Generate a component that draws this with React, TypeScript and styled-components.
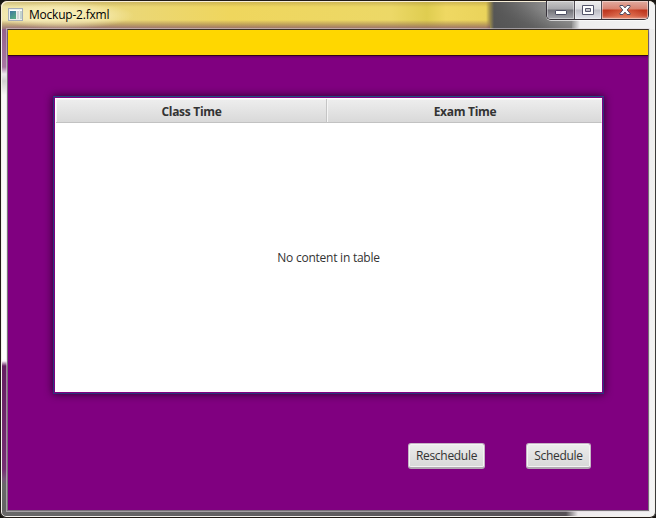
import React from 'react';
import styled, { createGlobalStyle } from 'styled-components';

const GlobalStyle = createGlobalStyle`
  * { box-sizing: border-box; }
  html, body { margin: 0; padding: 0; overflow: hidden; background: #171511; }
  body { font-family: "Open Sans", "Noto Sans", sans-serif; }
`;

const WindowFrame = styled.div`
  width: 656px;
  height: 518px;
  display: flex;
  flex-direction: column;
  border: 1px solid #211b17;
  border-right-color: #3b3b3b;
  border-radius: 7px 7px 6px 6px;
  padding: 0 6px 6px;
  box-shadow: inset 0 0 0 1px #f4f1ec;
  background:
    linear-gradient(90deg, #686868 0, #605e60 300px, #555055 565px, #eeeaec 577px, #f4f4f4 100%) 0 510px / 100% 8px no-repeat,
    linear-gradient(180deg, #ededed 0, #f5f5f5 100%) 647px 28px / 9px 490px no-repeat,
    linear-gradient(180deg, #95628c 0, #a878a2 38px, #eee9ee 45px, #d2d0d0 52px, #f9f7f7 66px, #fff 330px, #fcf5fa 332px, #651e62 337px, #762e73 440px, #78567a 450px, #686868 456px, #626262 100%) 0 28px / 8px 490px no-repeat,
    #eee;
`;

const TitleBar = styled.header`
  height: 28px;
  flex: none;
  margin: 0 -6px;
  padding: 0 6px;
  display: flex;
  align-items: flex-start;
  border-radius: 6px 6px 0 0;
  box-shadow: inset 1px 1px 0 #f8efd8;
  background:
    radial-gradient(ellipse at center, #fff8d499 0, #fff7cf77 40%, #fff7cf00 70%) -8px 1px / 142px 27px no-repeat,
    linear-gradient(180deg, #9f853d77 0, #efe39c00 6px, #b49a6000 19px, #a07d5588 23px, #84566abb 27px) 0 0 / 489px 28px no-repeat,
    linear-gradient(90deg, #f0e5aa 0, #ead779 120px, #efd65d 230px, #ecd867 390px, #dfcd50 426px, #efd862 445px, #ead35b 485px, #9a8b4c 489px, #77735b00 493px) 0 0 / 493px 28px no-repeat,
    linear-gradient(90deg, #555 0, #55555500 60px) 489px 0 / 60px 28px no-repeat,
    linear-gradient(20deg, #535353 0, #666 34%, #8c8c8c 66%, #999 100%) 485px 0 / 86px 28px no-repeat,
    linear-gradient(90deg, #888 570px, #ededed 579px, #f3f3f3 100%);
`;

const AppIcon = styled.svg`
  width: 16px;
  height: 14px;
  margin: 7px 5px 0 1px;
  flex: none;
`;

const Title = styled.span`
  margin-top: 5px;
  color: #000;
  font-size: 12px;
  line-height: 17px;
  letter-spacing: -0.22px;
  white-space: nowrap;
`;

const CaptionControls = styled.div`
  display: flex;
  height: 19px;
  width: 103px;
  margin-left: auto;
  border: 1px solid #36313a;
  border-top: 0;
  border-radius: 0 0 5px 5px;
  overflow: hidden;
  box-shadow: 0 1px 0 #ffffffaa;
`;

const captionFills = {
  minimize: 'linear-gradient(180deg, #c8c8c8 0, #a7a7aa 8px, #737379 9px, #a6a6ad 18px)',
  maximize: 'linear-gradient(180deg, #eee 0, #dadadd 8px, #bbbcc4 9px, #e3e3eb 18px)',
  close: 'radial-gradient(ellipse at 50% 115%, #f08b67cc, #d7614400 65%), linear-gradient(180deg, #e2aca0 0, #d78272 8px, #bd341c 9px, #cb5038 15px, #dda198 18px)',
};

const CaptionButton = styled.button<{ $kind: keyof typeof captionFills }>`
  width: ${({ $kind }) => ($kind === 'close' ? 46 : $kind === 'minimize' ? 28 : 27)}px;
  height: 18px;
  padding: 0;
  border: 0;
  border-right: ${({ $kind }) => ($kind === 'close' ? '0' : '1px solid #514c53')};
  box-shadow: inset 0 0 0 1px #ffffff66;
  background: ${({ $kind }) => captionFills[$kind]};
  display: flex;
  flex: none;
  justify-content: center;
`;

const CaptionGlyph = styled.svg`
  width: 14px;
  height: 18px;
  flex: none;
`;

const Client = styled.main`
  width: 642px;
  height: 482px;
  flex: none;
  border: 1px solid #777078;
  border-top-color: #3b3024;
  display: flex;
  flex-direction: column;
  background: #800080;
  box-shadow: 0 0 0 1px #ddd4dc88;
`;

const Banner = styled.div`
  height: 25px;
  flex: none;
  background: #ffd700;
  box-shadow: 0 1px 0 #35001c, 0 2px 2px #43004388;
`;

const Workspace = styled.section`
  flex: 1;
  display: flex;
  flex-direction: column;
  align-items: flex-start;
  padding: 41px 0 0 45px;
`;

const Table = styled.div`
  width: 551px;
  height: 298px;
  border: 1px solid #2d347c;
  border-top-color: #214c82;
  border-radius: 1px;
  padding: 1px;
  box-shadow: 0 0 8px #260026;
  display: flex;
  flex-direction: column;
`;

const Columns = styled.div`
  display: grid;
  grid-template-columns: 271px 275px;
  height: 25px;
  padding: 1px 0 0 1px;
  background: #fff;
`;

const ColumnHeader = styled.div`
  height: 24px;
  padding-left: 1px;
  border-right: 1px solid #c5c5c5;
  border-bottom: 1px solid #c2c2c2;
  box-shadow: inset 1px 1px 0 #f5f5f5;
  background: linear-gradient(180deg, #eee, #d9d9d9);
  color: #333;
  font-size: 12px;
  font-weight: 700;
  line-height: 25px;
  letter-spacing: -0.3px;
  text-align: center;

  &:last-child { padding-left: 2px; border-right-color: #eee; }
`;

const EmptyBody = styled.div`
  flex: 1;
  display: flex;
  align-items: center;
  justify-content: center;
  background: #fff;
  color: #333;
  font-size: 12px;
  letter-spacing: -0.24px;
`;

const Actions = styled.div`
  display: flex;
  gap: 41px;
  margin: 49px 0 0 355px;
`;

const ActionButton = styled.button<{ $width: number }>`
  width: ${({ $width }) => $width}px;
  height: 26px;
  padding: 0;
  border: 1px solid #c5b5c5;
  border-bottom: 2px solid #b2a9b2;
  border-radius: 3px;
  box-shadow: inset 0 0 0 1px #f4f4f4;
  background: linear-gradient(180deg, #ececec, #d8d8d8);
  color: #333;
  font-family: inherit;
  font-size: 12px;
  line-height: 22px;
  letter-spacing: -0.3px;
`;

export default function App() {
  return (
    <>
      <GlobalStyle />
      <WindowFrame>
        <TitleBar>
          <AppIcon viewBox="0 0 16 14">
            <defs>
              <linearGradient id="preview" x2="0.6" y2="1">
                <stop stopColor="#3e78a2" />
                <stop offset="1" stopColor="#57a985" />
              </linearGradient>
            </defs>
            <rect x=".5" y=".5" width="14" height="12" fill="#eef0ee" stroke="#a5aeb8" />
            <rect x="2" y="3" width="6" height="8" fill="url(#preview)" />
            <rect x="9" y="3" width="2" height="8" fill="#d4d6d6" />
            <rect x="12" y="3" width="2" height="8" fill="#c4d4ce" />
            <path d="M2 2.5H11M12 2.5H14" stroke="#fff" />
          </AppIcon>
          <Title>Mockup-2.fxml</Title>
          <CaptionControls>
            <CaptionButton $kind="minimize" aria-label="Minimize">
              <CaptionGlyph viewBox="0 0 14 18"><rect x="1.5" y="9.5" width="11" height="4" rx=".6" fill="#fff" stroke="#4b4c60" /></CaptionGlyph>
            </CaptionButton>
            <CaptionButton $kind="maximize" aria-label="Maximize">
              <CaptionGlyph viewBox="0 0 14 18"><path d="M1.5 4.5h11v9h-11zM4.5 7.5h5v3h-5z" fill="#fff" fillRule="evenodd" stroke="#55566a" /></CaptionGlyph>
            </CaptionButton>
            <CaptionButton $kind="close" aria-label="Close">
              <CaptionGlyph viewBox="0 0 14 18"><path d="M2 4.5h3l2 2.4 2-2.4h3v1.2L9.2 9l2.8 3.3v1.2H9l-2-2.4-2 2.4H2v-1.2L4.8 9 2 5.7z" fill="#fff" stroke="#514d60" /></CaptionGlyph>
            </CaptionButton>
          </CaptionControls>
        </TitleBar>
        <Client>
          <Banner />
          <Workspace>
            <Table>
              <Columns>
                <ColumnHeader>Class Time</ColumnHeader>
                <ColumnHeader>Exam Time</ColumnHeader>
              </Columns>
              <EmptyBody>No content in table</EmptyBody>
            </Table>
            <Actions>
              <ActionButton $width={77}>Reschedule</ActionButton>
              <ActionButton $width={65}>Schedule</ActionButton>
            </Actions>
          </Workspace>
        </Client>
      </WindowFrame>
    </>
  );
}
